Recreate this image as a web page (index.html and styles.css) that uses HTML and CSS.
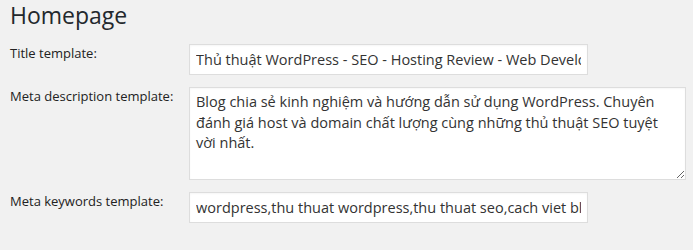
FILE: index.html
```html
<!DOCTYPE html>
<html lang="vi">
<head>
  <meta charset="UTF-8">
  <meta name="viewport" content="width=device-width, initial-scale=1.0">
  <title>Homepage</title>
  <link rel="stylesheet" href="styles.css">
</head>
<body>
  <div class="wrap">
    <h2>Homepage</h2>

    <div class="form">
      <label for="title">Title template:</label>
      <input type="text" id="title" class="field" value="Thủ thuật WordPress - SEO - Hosting Review - Web Development">

      <label for="metadesc">Meta description template:</label>
      <textarea id="metadesc" class="field area">Blog chia sẻ kinh nghiệm và hướng dẫn sử dụng WordPress. Chuyên đánh giá host và domain chất lượng cùng những thủ thuật SEO tuyệt vời nhất.</textarea>

      <label for="metakey">Meta keywords template:</label>
      <input type="text" id="metakey" class="field" value="wordpress,thu thuat wordpress,thu thuat seo,cach viet blog">
    </div>
  </div>
</body>
</html>
```

FILE: styles.css
```css
body {
  margin: 0;
  padding: 0;
  background-color: #f1f1f1;
  font-family: "Open Sans", sans-serif;
  color: #222;
}

.wrap {
  padding: 0 10px;
}

h2 {
  margin: 0 0 13px;
  font-size: 23px;
  font-weight: 400;
  line-height: 31px;
  color: #23282d;
}

.form {
  display: grid;
  grid-template-columns: 179px 1fr;
  row-gap: 12px;
  align-items: start;
}

label {
  font-size: 13px;
  line-height: 18px;
}

.field {
  box-sizing: border-box;
  width: 399px;
  height: 31px;
  margin: 0;
  padding: 0 6px;
  border: 1px solid #ddd;
  border-radius: 0;
  background-color: #fff;
  font-family: "Open Sans", sans-serif;
  font-size: 14.5px;
  color: #333;
  box-shadow: inset 0 1px 2px rgba(0, 0, 0, 0.04);
  outline: none;
}

.area {
  width: 497px;
  height: 93px;
  padding: 4px 8px 4px 6px;
  line-height: 20.5px;
  resize: vertical;
  display: block;
}
```
